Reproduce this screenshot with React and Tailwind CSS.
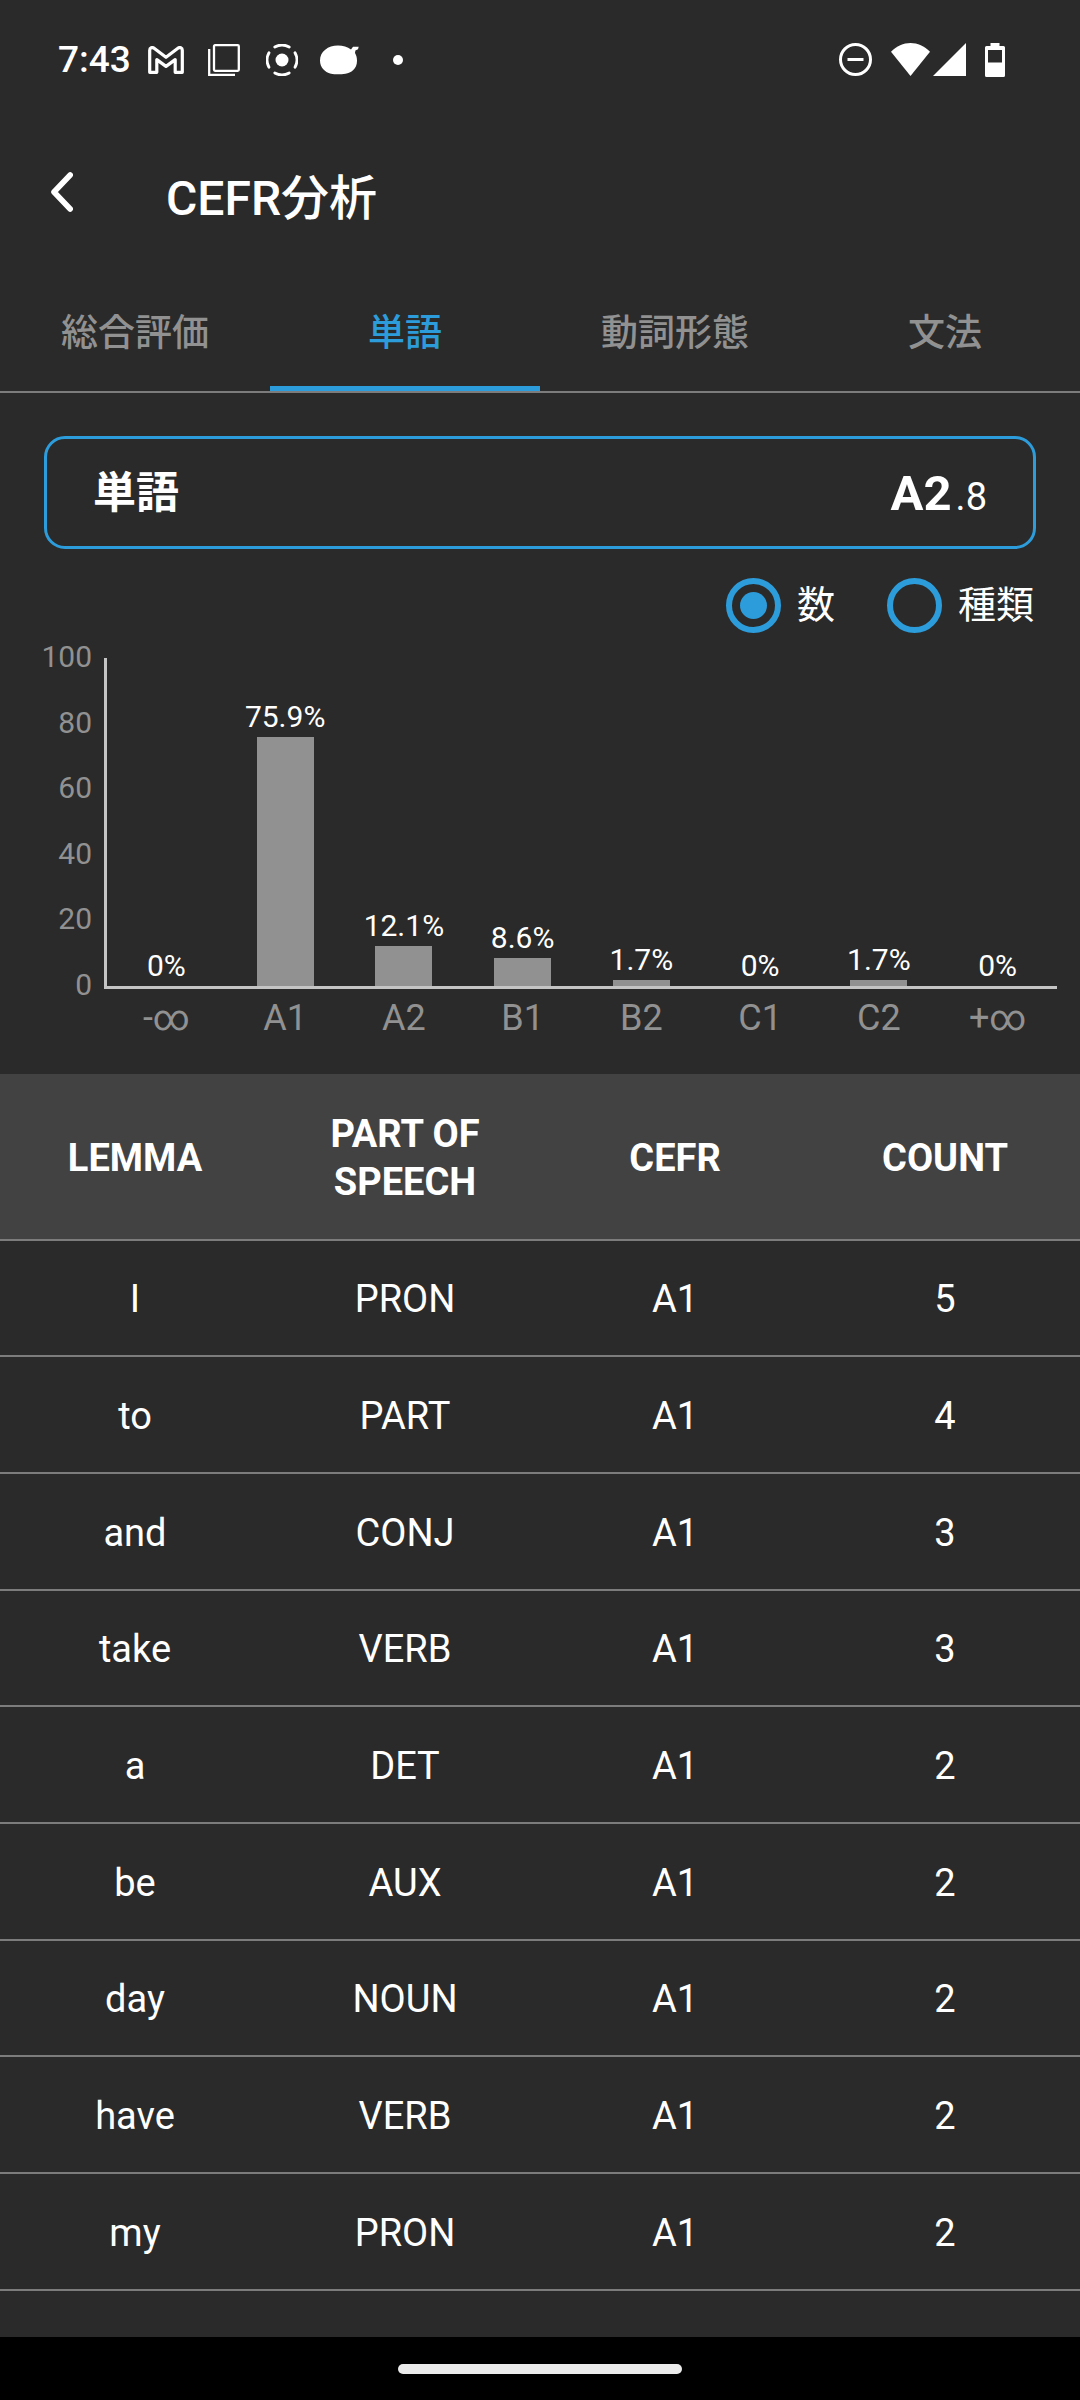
import React, { useState } from 'react'

const TABS = ['総合評価', '単語', '動詞形態', '文法']
const MODES = ['数', '種類']
const TICKS = [100, 80, 60, 40, 20, 0]

const LEVELS = [
  { name: '-∞', value: 0 },
  { name: 'A1', value: 75.9 },
  { name: 'A2', value: 12.1 },
  { name: 'B1', value: 8.6 },
  { name: 'B2', value: 1.7 },
  { name: 'C1', value: 0 },
  { name: 'C2', value: 1.7 },
  { name: '+∞', value: 0 },
]

const COLUMNS = ['LEMMA', 'PART OF SPEECH', 'CEFR', 'COUNT']

const WORDS = [
  ['I', 'PRON', 'A1', 5],
  ['to', 'PART', 'A1', 4],
  ['and', 'CONJ', 'A1', 3],
  ['take', 'VERB', 'A1', 3],
  ['a', 'DET', 'A1', 2],
  ['be', 'AUX', 'A1', 2],
  ['day', 'NOUN', 'A1', 2],
  ['have', 'VERB', 'A1', 2],
  ['my', 'PRON', 'A1', 2],
]

function StatusBar() {
  return (
    <div className="flex h-[119px] items-center justify-between pr-[75px] pl-[58px]">
      <div className="flex items-center">
        <span className="w-[90px] text-[37px] leading-[40px] font-medium">7:43</span>
        {/* mail */}
        <svg className="mr-6 h-7 w-9" viewBox="0 0 36 28" fill="none" stroke="#fff" strokeWidth="3.2" strokeLinejoin="round">
          <path d="M1.7 4.2C1.7 1.8 4.2 .8 6.1 2.3L18 11.3 29.9 2.3C31.8 .8 34.3 1.8 34.3 4.2V26.3H27.2V13.6L18 20.4 8.8 13.6V26.3H1.7Z" />
        </svg>
        {/* stacked squares */}
        <svg className="mr-[26px] h-8 w-8" viewBox="0 0 32 32" fill="none" stroke="#fff" strokeWidth="2.3">
          <rect x="6" y="1.2" width="24.8" height="25.6" rx="1" />
          <path d="M1.2 5V30.8H27" />
        </svg>
        {/* focus ring */}
        <svg className="mr-[22px] h-8 w-8" viewBox="0 0 32 32" fill="none" stroke="#fff" strokeWidth="2.8" strokeLinecap="round">
          <circle cx="16" cy="16" r="6.5" fill="#fff" stroke="none" />
          <path d="M8.8 3A14.8 14.8 0 0 1 23.2 3M29 8.8A14.8 14.8 0 0 1 29 23.2M23.2 29A14.8 14.8 0 0 1 8.8 29M3 23.2A14.8 14.8 0 0 1 3 8.8" />
        </svg>
        <svg className="mr-[34px] h-[30px] w-[39px]" viewBox="0 0 39 30" fill="#fff">
          <path d="M18 .5C23 .5 27.5 1.7 31 4.6L33 1.7 38.7 1.8 38 4.3 35.4 5.5 35 8C36.5 10.5 37 13 37 16 37 24 31 28 25.5 28.7 20 29.6 15 29.5 11 28.7 4.5 27 0 22.5 0 15.5 0 6.5 8 .5 18 .5Z" />
        </svg>
        <span className="h-[10px] w-[10px] rounded-full bg-white" />
      </div>
      <div className="flex items-center">
        <svg className="mr-[19px] h-[33px] w-[33px]" viewBox="0 0 33 33" fill="none" stroke="#fff" strokeWidth="3">
          <circle cx="16.5" cy="16.5" r="15" />
          <path d="M8.5 16.5H24.5" />
        </svg>
        <svg className="mr-[3px] h-[33px] w-[39px]" viewBox="0 0 39 33" fill="#fff">
          <path d="M0 8.8C11 -2.8 28 -2.8 39 8.8L19.5 33Z" />
        </svg>
        <svg className="mr-[19px] h-[33px] w-[33px]" viewBox="0 0 33 33" fill="#fff">
          <path d="M33 0V33H0Z" />
        </svg>
        <svg className="h-[34px] w-5" viewBox="0 0 20 34" fill="#fff" fillRule="evenodd">
          <path d="M5.5 0H14.5V3H18.5Q20 3 20 4.5V32.5Q20 34 18.5 34H1.5Q0 34 0 32.5V4.5Q0 3 1.5 3H5.5ZM3 7V19.5H17V7Z" />
        </svg>
      </div>
    </div>
  )
}

function Chart() {
  return (
    <div className="flex pr-[23px] pb-[35px]">
      <div className="-mt-px flex h-[328px] w-[92px] flex-col justify-between text-right text-[30px] text-[#919191]">
        {TICKS.map((t) => (
          <div key={t} className="leading-[0px]">{t}</div>
        ))}
      </div>
      <div className="ml-3 flex-1">
        <div className="flex h-[331px] items-end border-b-[3px] border-l-[3px] border-[#c4c4c4]">
          {LEVELS.map((l) => (
            <div key={l.name} className="flex h-full flex-1 flex-col items-center justify-end">
              <div className="text-[30px] leading-[40px]">{l.value}%</div>
              <div className="w-[57px] shrink-0 bg-[#919191]" style={{ height: `${l.value}%` }} />
            </div>
          ))}
        </div>
        <div className="flex pt-2 pl-[3px] text-[36px] leading-[42px] text-[#919191]">
          {LEVELS.map((l) => (
            <div key={l.name} className="flex-1 text-center">{l.name}</div>
          ))}
        </div>
      </div>
    </div>
  )
}

export default function App() {
  const [tab, setTab] = useState(1)
  const [mode, setMode] = useState('数')

  return (
    <div className="flex min-h-screen flex-col bg-[#2a2a2a] font-[Roboto,'Noto_Sans_CJK_JP',sans-serif] text-white">
      <StatusBar />

      <header className="flex h-[153px] items-start pl-[44px]">
        <button aria-label="戻る" className="mt-[45px] flex h-[56px] w-[56px] pt-2 pl-[7px]">
          <svg className="h-10 w-[22px]" viewBox="0 0 22 40" fill="none" stroke="#fff" strokeWidth="5.6" strokeLinecap="round" strokeLinejoin="round">
            <path d="M19.2 3 3 20 19.2 37" />
          </svg>
        </button>
        <h1 className="mt-[47px] ml-[66px] text-[48px] leading-[66px] font-medium">CEFR分析</h1>
      </header>

      <nav className="flex border-b-2 border-[#7c7c7c]" role="tablist">
        {TABS.map((name, i) => (
          <button
            key={name}
            role="tab"
            aria-selected={tab === i}
            onClick={() => setTab(i)}
            className={`h-[119px] flex-1 border-b-[5px] pt-[10px] text-[37px] leading-[48px] font-medium ${
              tab === i ? 'border-[#2d9cdb] text-[#2d9cdb]' : 'border-transparent text-[#919191]'
            }`}
          >
            {name}
          </button>
        ))}
      </nav>

      <main>
        <section className="mx-[44px] mt-[43px] flex h-[113px] items-center justify-between rounded-[21px] border-[3px] border-[#2d9cdb] px-[46px]">
          <h2 className="text-[43px] leading-[60px] font-bold">単語</h2>
          <p className="pt-[6px] text-[38px] leading-[60px]">
            <span className="mr-1 text-[49px] font-bold">A2</span>.8
          </p>
        </section>

        <div className="mr-[46px] flex h-[109px] justify-end gap-[52px] pt-7">
          {MODES.map((m) => (
            <label key={m} className="flex h-[56px] items-center gap-4 text-[38px] leading-[56px]">
              <input
                type="radio"
                name="mode"
                checked={mode === m}
                onChange={() => setMode(m)}
                className="flex h-[55px] w-[55px] appearance-none items-center justify-center rounded-full border-[6px] border-[#2d9cdb] before:h-[27px] before:w-[27px] before:rounded-full checked:before:bg-[#2d9cdb]"
              />
              {m}
            </label>
          ))}
        </div>

        <Chart />

        <table className="w-full table-fixed border-collapse text-center text-[38px] leading-[48px]">
          <thead className="bg-[#424242]">
            <tr className="h-[166px] border-b-2 border-[#7c7c7c]">
              {COLUMNS.map((c) => (
                <th key={c} className="px-10 pt-[2px] font-bold">{c}</th>
              ))}
            </tr>
          </thead>
          <tbody>
            {WORDS.map((row) => (
              <tr key={row[0]} className="h-[117px] border-b-2 border-[#7c7c7c] nth-[3n+1]:h-[116px]">
                {row.map((cell, i) => (
                  <td key={i} className="pt-[2px]">{cell}</td>
                ))}
              </tr>
            ))}
          </tbody>
        </table>
      </main>

      <footer className="mt-auto flex h-[63px] items-center justify-center bg-black">
        <div className="h-[10px] w-[284px] rounded-full bg-[#ebebeb]" />
      </footer>
    </div>
  )
}
